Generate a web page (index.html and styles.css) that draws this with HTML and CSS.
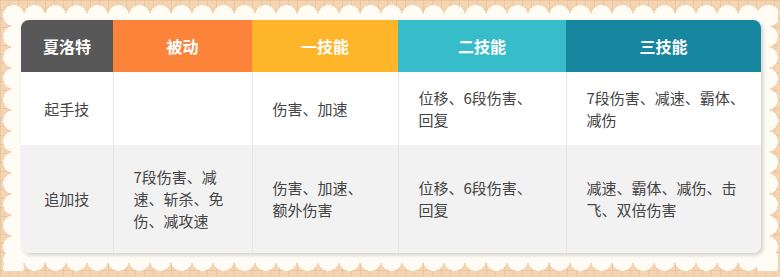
FILE: index.html
```html
<!DOCTYPE html>
<html lang="zh">
<head>
<meta charset="utf-8">
<link rel="stylesheet" href="styles.css">
</head>
<body>
<div class="panel">
  <div class="table-wrap">
    <table class="skills">
      <colgroup>
        <col class="c1"><col class="c2"><col class="c3"><col class="c4"><col class="c5">
      </colgroup>
      <thead>
        <tr>
          <th class="h-name">夏洛特</th>
          <th class="h-passive">被动</th>
          <th class="h-s1">一技能</th>
          <th class="h-s2">二技能</th>
          <th class="h-s3">三技能</th>
        </tr>
      </thead>
      <tbody>
        <tr class="row-a">
          <td class="label">起手技</td>
          <td></td>
          <td>伤害、加速</td>
          <td>位移、6段伤害、<br>回复</td>
          <td>7段伤害、减速、霸体、<br>减伤</td>
        </tr>
        <tr class="row-b">
          <td class="label">追加技</td>
          <td>7段伤害、减<br>速、斩杀、免<br>伤、减攻速</td>
          <td>伤害、加速、<br>额外伤害</td>
          <td>位移、6段伤害、<br>回复</td>
          <td>减速、霸体、减伤、击<br>飞、双倍伤害</td>
        </tr>
      </tbody>
    </table>
  </div>
</div>
</body>
</html>
```
FILE: styles.css
```css
html, body {
  margin: 0;
  padding: 0;
}
body {
  width: 780px;
  height: 277px;
  overflow: hidden;
  background-color: #f4d4b1;
  background-image:
    linear-gradient(to right, rgba(205, 160, 120, 0.22) 1px, transparent 1px),
    linear-gradient(to bottom, rgba(205, 160, 120, 0.22) 1px, transparent 1px);
  background-size: 9px 9px;
  font-family: "Noto Sans CJK SC", "Noto Sans", sans-serif;
}
.panel {
  --cream: #fffcf6;
  margin: 5px 0 0 3px;
  width: 775px;
  height: 266px;
  box-sizing: border-box;
  padding: 15px 17px 18px 18px;
  background-color: transparent;
  background-image:
    linear-gradient(var(--cream), var(--cream)),
    radial-gradient(circle closest-side, var(--cream) 96%, rgba(255,252,246,0) 100%),
    radial-gradient(circle closest-side, var(--cream) 96%, rgba(255,252,246,0) 100%),
    radial-gradient(circle closest-side, var(--cream) 96%, rgba(255,252,246,0) 100%),
    radial-gradient(circle closest-side, var(--cream) 96%, rgba(255,252,246,0) 100%);
  background-size:
    calc(100% - 21px) calc(100% - 21px),
    21px 21px,
    21px 21px,
    21px 21px,
    21px 21px;
  background-position:
    center center,
    left top,
    left bottom,
    left top,
    right top;
  background-repeat:
    no-repeat,
    repeat-x,
    repeat-x,
    repeat-y,
    repeat-y;
}
.table-wrap {
  width: 740px;
  height: 233px;
  border-radius: 8px;
  overflow: hidden;
  box-shadow: 2px 2px 4px rgba(0, 0, 0, 0.18);
  background: #fff;
}
.skills {
  width: 740px;
  height: 233px;
  table-layout: fixed;
  border-collapse: collapse;
}
.c1 { width: 92px; }
.c2 { width: 139px; }
.c3 { width: 146px; }
.c4 { width: 168px; }
.c5 { width: 195px; }
.skills th {
  height: 52px;
  padding: 0;
  color: #fff;
  font-size: 16px;
  font-weight: 700;
  text-align: center;
}
.h-name { background: #585858; }
.h-passive { background: #fb843a; }
.h-s1 { background: #ffb52a; }
.h-s2 { background: #37bdca; }
.h-s3 { background: #17869f; }
.skills td {
  padding: 0 10px 0 20px;
  color: #444;
  font-size: 15px;
  line-height: 22px;
  vertical-align: middle;
  text-align: left;
  border-left: 1px solid #e6e6e6;
}
.skills td:first-child {
  border-left: none;
}
.skills td.label {
  text-align: center;
  padding: 0;
}
.row-a td {
  height: 73px;
  background: #fff;
}
.row-b td {
  height: 108px;
  background: #f2f2f2;
}
```
